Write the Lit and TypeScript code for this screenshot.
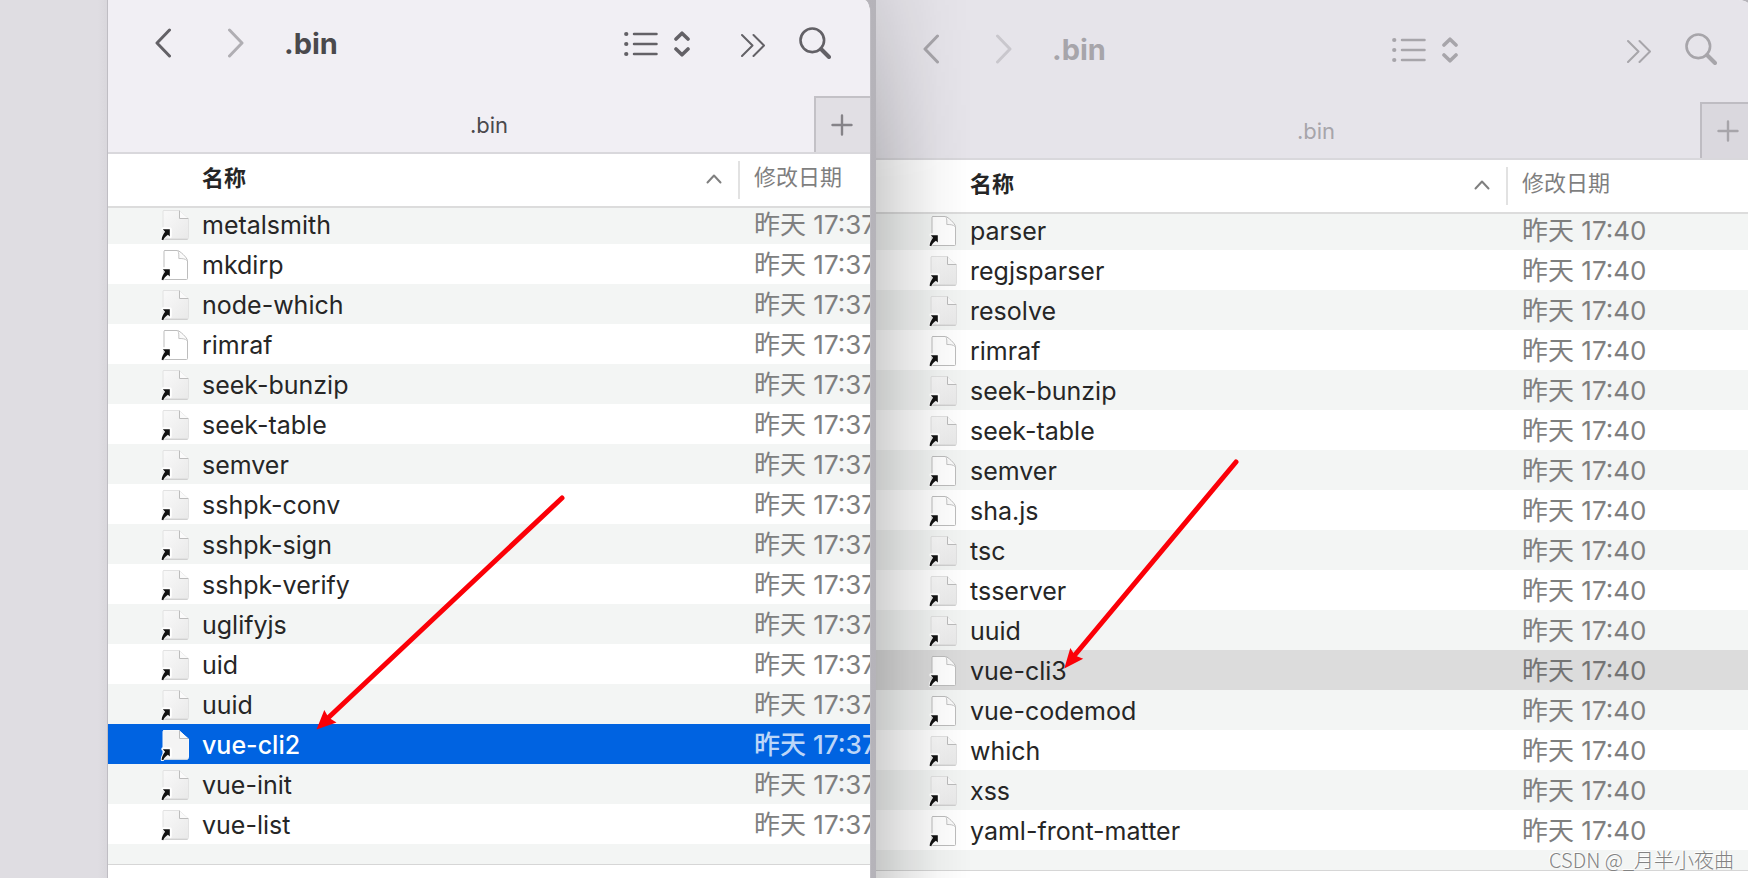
import { LitElement, html, css, svg } from "lit";
import { customElement, property } from "lit/decorators.js";
import { classMap } from "lit/directives/class-map.js";

interface FileEntry {
  name: string;
  plain?: boolean;
}

const parse = (list: string): FileEntry[] =>
  list.split(" ").map((item) => ({ name: item.replace("*", ""), plain: item.endsWith("*") }));

// A trailing asterisk marks a file with the blank page icon.
const LEFT_FILES = parse(
  "metalsmith mkdirp* node-which rimraf* seek-bunzip seek-table semver sshpk-conv sshpk-sign sshpk-verify uglifyjs uid uuid vue-cli2 vue-init vue-list"
);
const RIGHT_FILES = parse(
  "parser* regjsparser resolve rimraf* seek-bunzip seek-table semver* sha.js* tsc tsserver uuid vue-cli3* vue-codemod* which xss yaml-front-matter*"
);

@customElement("finder-window")
export class FinderWindow extends LitElement {
  @property({ type: Array }) files: FileEntry[] = [];
  @property() date = "";
  @property() selected = "";
  @property({ type: Boolean, reflect: true }) inactive = false;

  static styles = css`
    :host {
      display: flex;
      flex-direction: column;
      position: relative;
      overflow: hidden;
      min-width: 0;
      background: #fff;
      --chrome: #f1eff4;
      --ink: #636166;
      --title: #4a494c;
      --add: #e1dfe4;
      --add-edge: #c3c1c6;
      --add-ink: #858388;
      --select: #0063e1;
      --select-text: #fff;
      --select-date: #bcd6f8;
      --select-weight: 500;
      border-top-right-radius: 6px 14px;
    }
    :host([inactive]) {
      --chrome: #e6e4ea;
      --ink: #a7a5aa;
      --title: #a7a5aa;
      --add: #dad8de;
      --add-edge: #bebcc2;
      --add-ink: #a7a5aa;
      --select: #dcdcdc;
      --select-text: #262626;
      --select-date: #747474;
      --select-weight: 400;
      border-top-right-radius: 18px;
    }
    /* shade cast by the window in front */
    :host([inactive])::after {
      content: "";
      position: absolute;
      inset: 0 auto 0 0;
      width: 96px;
      pointer-events: none;
      background: linear-gradient(90deg, rgba(0, 0, 0, 0.18), rgba(0, 0, 0, 0.1) 30%, rgba(0, 0, 0, 0.03) 65%, transparent);
      mask-image: linear-gradient(rgba(0, 0, 0, 0.4), #000 180px);
    }
    button {
      appearance: none;
      border: 0;
      padding: 0;
      margin: 0;
      background: none;
      color: inherit;
      display: flex;
      font: inherit;
    }
    svg {
      display: block;
      fill: none;
      stroke: currentColor;
      stroke-linecap: round;
      stroke-linejoin: round;
    }
    .chrome {
      background: var(--chrome);
      border-bottom: 2px solid #d9d8dc;
      color: var(--ink);
    }
    :host([inactive]) .chrome {
      padding-top: 6px;
    }
    .toolbar {
      display: flex;
      align-items: center;
      height: 96px;
      box-sizing: border-box;
      padding: 0 39px 10px 47px;
    }
    .nav {
      display: flex;
      gap: 57px;
    }
    .forward {
      opacity: 0.45;
    }
    .title {
      width: 340px;
      margin: 0 0 0 40px;
      padding-top: 2px;
      font-size: 29px;
      line-height: 36px;
      font-weight: 700;
      color: var(--title);
    }
    .view {
      gap: 16px;
      align-items: center;
      padding-top: 2px;
    }
    .end {
      display: flex;
      align-items: center;
      gap: 34px;
      margin-left: auto;
    }
    .more {
      padding-top: 4px;
    }
    .tabs {
      display: grid;
      grid-template-columns: 56px 1fr 56px;
      height: 56px;
      align-items: center;
    }
    .tab {
      grid-column: 2;
      padding-top: 2px;
      text-align: center;
      font-size: 22px;
      line-height: 28px;
      color: var(--title);
    }
    .add {
      box-sizing: border-box;
      height: 56px;
      align-items: center;
      justify-content: center;
      padding-right: 2px;
      background: var(--add);
      border-top: 2px solid var(--add-edge);
      border-left: 2px solid var(--add-edge);
      color: var(--add-ink);
    }
    table {
      width: 100%;
      table-layout: fixed;
      border-collapse: separate;
      border-spacing: 0;
      border-bottom: 1px solid #d6d6d6;
    }
    .name-col {
      width: 630px;
    }
    th,
    td {
      box-sizing: border-box;
      padding: 0;
      text-align: left;
      white-space: nowrap;
      overflow: hidden;
      vertical-align: middle;
    }
    th {
      height: 54px;
      border-bottom: 2px solid #dcdcdc;
      font-size: 22px;
      line-height: 28px;
      font-weight: 400;
      color: #7f7f7f;
    }
    .sort {
      width: 100%;
      box-sizing: border-box;
      padding: 0 16px 4px 94px;
      justify-content: space-between;
      align-items: center;
      font-weight: 700;
      color: #262626;
    }
    .sort svg {
      margin-top: 2px;
      color: #7f7f7f;
    }
    .date-head {
      border-left: 2px solid #e2e2e2;
      padding: 2px 0 8px 14px;
    }
    td {
      height: 40px;
      padding-top: 2px;
      font-size: 25px;
      line-height: 30px;
      color: #262626;
    }
    tr:first-child td {
      height: 36px;
      padding: 0 0 2px;
    }
    tbody tr:nth-child(odd) td {
      background: #f3f5f4;
    }
    tbody tr.rest td {
      height: 20px;
    }
    .file {
      display: flex;
      align-items: center;
      gap: 12px;
      padding-left: 51px;
    }
    tbody tr td.date {
      padding-left: 16px;
      font-size: 26px;
      color: #7f7f7f;
      text-overflow: clip;
    }
    tbody tr.selected td {
      background: var(--select);
      color: var(--select-text);
      font-weight: var(--select-weight);
    }
    tbody tr.selected td.date {
      color: var(--select-date);
    }
  `;

  private icon(file: FileEntry, selected: boolean) {
    const page = file.plain
      ? svg`<path d="M6 1.500H18.500C21 2 28 8.500 28.500 11.500V29.500a1 1 0 0 1-1 1H6a1 1 0 0 1-1-1V2.500a1 1 0 0 1 1-1z" fill="#fff" stroke="#bdbdbd" />
          <path d="M19 2c1 2 .8 4 .8 7.500 3 0 6.500 0 8.300 2" fill="#fafafa" stroke="#c4c4c4" />`
      : svg`<path d="M5 1.500H20L29.500 10V28.500a1.500 1.500 0 0 1-1.500 1.500H5a1 1 0 0 1-1-1V2.500a1 1 0 0 1 1-1z" fill=${selected ? "#f4f4f4" : "url(#paper)"} stroke=${selected ? "#f8f8f8" : "#e2e2e2"} />
          <path d="M5 30.300H28.300" stroke=${selected ? "#d8dce2" : "#cacaca"} />
          <path d="M20.500 2V9.500H29" fill="#fbfbfb" stroke="#bcbcbc" />`;
    return html`<svg width="31" height="32" viewBox="0 0 31 32" aria-hidden="true">
      <defs>
        <linearGradient id="paper" x1="0" y1="0" x2="1" y2="1">
          <stop offset="0" stop-color="#f9f9f9" />
          <stop offset="1" stop-color="#e9e9e9" />
        </linearGradient>
      </defs>
      ${page}
      <path d="M4 20H11V27.500M8.500 23C5.500 25 3.500 27.500 3.500 30.500" stroke="#fff" stroke-width="3.500" />
      <path d="M3.800 20.300H10.800V27.600L8.900 25.700C6.600 27.200 5.100 28.800 4.300 31.200L2.600 30.800C2.900 27.600 4.200 25.200 6.100 22.700z" fill="#111" stroke="none" />
    </svg>`;
  }

  render() {
    return html`
      <header class="chrome">
        <div class="toolbar">
          <div class="nav">
            <button aria-label="后退">
              <svg width="16" height="30" viewBox="0 0 16 30" stroke-width="3"><path d="M14.500 2L2 15L14.500 28" /></svg>
            </button>
            <button class="forward" aria-label="前进">
              <svg width="16" height="30" viewBox="0 0 16 30" stroke-width="3"><path d="M1.500 2L14 15L1.500 28" /></svg>
            </button>
          </div>
          <h1 class="title">.bin</h1>
          <button class="view" aria-label="显示方式">
            <svg width="34" height="26" viewBox="0 0 34 26" stroke-width="2.500">
              <path d="M10 3H32.500M10 13H32.500M10 23H32.500" />
              <path d="M2.200 3h.1M2.200 13h.1M2.200 23h.1" stroke-width="4.200" />
            </svg>
            <svg width="16" height="26" viewBox="0 0 16 26" stroke-width="3.600"><path d="M2 8L8 2.200L14 8M2 18L8 23.800L14 18" /></svg>
          </button>
          <div class="end">
            <button class="more" aria-label="更多">
              <svg width="24" height="24" viewBox="0 0 24 24" stroke-width="2"><path d="M1 2L11.500 12.500L1 23M12.500 2L23 12.500L12.500 23" /></svg>
            </button>
            <button aria-label="搜索">
              <svg width="32" height="32" viewBox="0 0 32 32" stroke-width="2.600">
                <circle cx="13.300" cy="13.300" r="11.800" />
                <path d="M22 22L30 30" stroke-width="4" />
              </svg>
            </button>
          </div>
        </div>
        <div class="tabs">
          <div class="tab">.bin</div>
          <button class="add" aria-label="新建标签页">
            <svg width="22" height="22" viewBox="0 0 22 22" stroke-width="2.400"><path d="M11 1.500V20.500M1.500 11H20.500" /></svg>
          </button>
        </div>
      </header>
      <table>
        <colgroup>
          <col class="name-col" />
          <col />
        </colgroup>
        <thead>
          <tr>
            <th scope="col" aria-sort="ascending">
              <button class="sort">
                名称
                <svg width="16" height="10" viewBox="0 0 16 10" stroke-width="2"><path d="M1.500 8.500L8 1.500L14.500 8.500" /></svg>
              </button>
            </th>
            <th scope="col"><div class="date-head">修改日期</div></th>
          </tr>
        </thead>
        <tbody>
          ${this.files.map((file) => {
            const selected = file.name === this.selected;
            return html`<tr class=${classMap({ selected })}>
              <td><div class="file">${this.icon(file, selected && !this.inactive)}<span>${file.name}</span></div></td>
              <td class="date">${this.date}</td>
            </tr>`;
          })}
          <tr class="rest">
            <td></td>
            <td></td>
          </tr>
        </tbody>
      </table>
    `;
  }
}

@customElement("app-root")
export class AppRoot extends LitElement {
  static styles = css`
    :host {
      display: block;
      position: relative;
      overflow: hidden;
      min-height: 100vh;
      background: #dfdde2;
      font-family: Inter, "Noto Sans CJK SC", sans-serif;
    }
    .desktop {
      display: grid;
      grid-template-columns: 108px minmax(0, 762fr) 6px minmax(0, 880fr);
      width: calc(100% + 8px);
      min-height: 100vh;
      background: linear-gradient(90deg, #dfdde2 98px, #d8d6db 108px, #d0ced4 108px, #b5b3b9 50%);
    }
    .front {
      box-shadow: 0 0 0 1px #bfbdc3;
    }
    .arrows {
      position: absolute;
      top: 0;
      left: 0;
      pointer-events: none;
    }
    .back {
      grid-column: 4;
    }
    .watermark {
      position: absolute;
      right: 14px;
      bottom: 5px;
      font: 20px/26px "Noto Sans CJK SC", sans-serif;
      font-weight: 300;
      color: #838383;
      text-shadow: -1px -1px 0 #fff;
    }
  `;

  render() {
    return html`
      <main class="desktop">
        <span></span>
        <finder-window class="front" .files=${LEFT_FILES} date="昨天 17:37" selected="vue-cli2"></finder-window>
        <finder-window class="back" inactive .files=${RIGHT_FILES} date="昨天 17:40" selected="vue-cli3"></finder-window>
      </main>
      <svg class="arrows" width="1748" height="878" viewBox="0 0 1748 878" fill="#fb0007" stroke="#fb0007" aria-hidden="true">
        <path d="M562 498L328 718" stroke-width="5" stroke-linecap="round" />
        <path d="M316.500 729.500L324.300 710L328.500 717.500L336.500 722.500z" stroke="none" />
        <path d="M1236 462L1074 656" stroke-width="5" stroke-linecap="round" />
        <path d="M1064.300 668.500L1070.300 648L1075 655.500L1083.200 658.700z" stroke="none" />
      </svg>
      <div class="watermark">CSDN @_月半小夜曲</div>
    `;
  }
}
